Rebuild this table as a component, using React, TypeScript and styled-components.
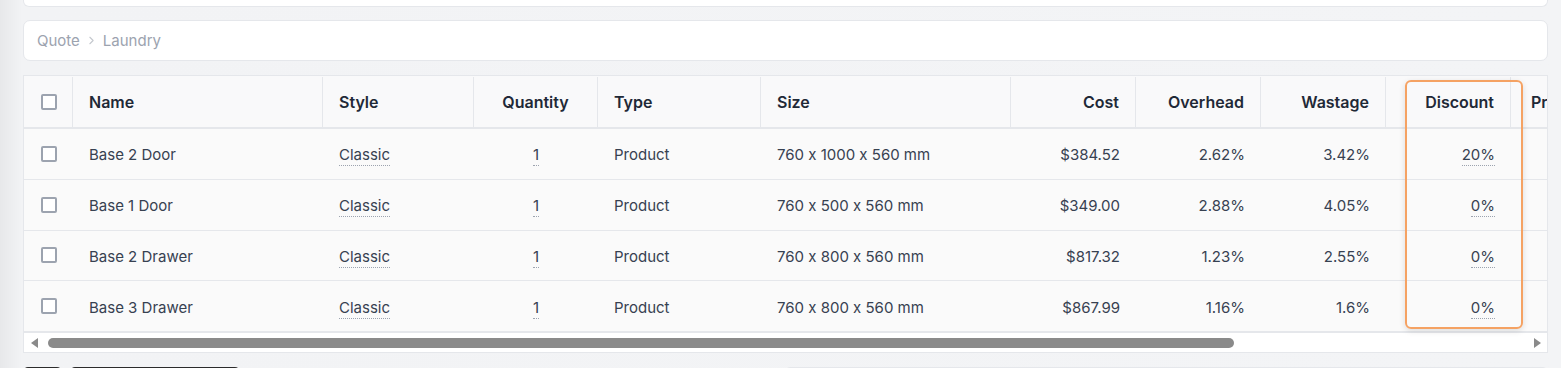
import React from "react";
import styled, { createGlobalStyle } from "styled-components";
import { ChevronRight } from "lucide-react";

const GlobalStyle = createGlobalStyle`
  html, body {
    margin: 0;
    padding: 0;
    height: 100%;
    overflow: hidden;
  }
  body {
    background: linear-gradient(to right, #e7e8ea 0, #f2f3f5 22px, #f3f4f6 100%);
    font-family: Inter, "Noto Sans", "Liberation Sans", sans-serif;
    font-feature-settings: "calt" 0;
    color: #374151;
  }
  * { box-sizing: border-box; }
`;

const Page = styled.div`
  display: flex;
  flex-direction: column;
  gap: 13px;
  padding: 0 13px 0 23px;
  width: 1561px;
  height: 368px;
  overflow: hidden;
`;

const TopCard = styled.div`
  flex: none;
  height: 7px;
  background: #fff;
  border: 1px solid #e5e7eb;
  border-top: none;
  border-radius: 0 0 6px 6px;
`;

const Breadcrumb = styled.nav`
  flex: none;
  height: 41px;
  background: #fff;
  border: 1px solid #e5e7eb;
  border-radius: 7px;
  display: flex;
  align-items: center;
  gap: 5px;
  padding: 0 13px;
  font-size: 15px;
  color: #9ca3af;
  margin-bottom: 1px;
`;

const TableCard = styled.div`
  flex: none;
  position: relative;
  height: 278px;
  background: #fff;
  border: 1px solid #e5e7eb;
  overflow: hidden;
`;

const Scroller = styled.div`
  overflow: hidden;
  width: 100%;
`;

const cols = "49px 250px 151px 124px 163px 250px 125px 125px 125px 125px 125px";

const HeaderRow = styled.div`
  display: grid;
  grid-template-columns: ${cols};
  width: 1612px;
  height: 53px;
  padding-top: 1px;
  background: #f9f9fa;
  border-bottom: 2px solid #e5e7eb;
`;

const Th = styled.div<{ $align?: "left" | "right" | "center"; $inset?: number }>`
  display: flex;
  align-items: center;
  justify-content: ${(p) =>
    p.$align === "right" ? "flex-end" : p.$align === "center" ? "center" : "flex-start"};
  padding: 0 16px 0 ${(p) => p.$inset ?? 16}px;
  border-right: 1px solid #e5e7eb;
  font-size: 16px;
  font-weight: 600;
  color: #1f2937;
  white-space: nowrap;
`;

const Row = styled.div`
  display: grid;
  grid-template-columns: ${cols};
  width: 1612px;
  height: 50.75px;
  background: #fafafa;
  border-bottom: 1px solid #e5e7eb;
`;

const Td = styled.div<{ $align?: "left" | "right" | "center" }>`
  display: flex;
  align-items: center;
  justify-content: ${(p) =>
    p.$align === "right" ? "flex-end" : p.$align === "center" ? "center" : "flex-start"};
  padding: 2px 16px 0;
  font-size: 15px;
  color: #374151;
  white-space: nowrap;
`;

const CheckCell = styled.div<{ $header?: boolean }>`
  display: flex;
  align-items: center;
  justify-content: flex-start;
  padding-left: 17px;
  border-right: ${(p) => (p.$header ? "1px solid #e5e7eb" : "none")};
`;

const Checkbox = styled.span`
  width: 16px;
  height: 16px;
  border: 2px solid #9ca3af;
  border-radius: 2px;
  background: #fff;
`;

const Editable = styled.span`
  border-bottom: 1px dotted #9ca3af;
  line-height: 18px;
  padding-bottom: 1px;
  margin-top: 3px;
`;

const ScrollBar = styled.div`
  display: flex;
  align-items: center;
  gap: 10px;
  height: 20px;
  padding: 0 6px 0 7px;
  background: #fff;
  border-top: 1px solid #e5e7eb;
`;

const Arrow = styled.span<{ $dir: "left" | "right" }>`
  width: 0;
  height: 0;
  border-top: 5px solid transparent;
  border-bottom: 5px solid transparent;
  ${(p) =>
    p.$dir === "left"
      ? "border-right: 7px solid #8a8a8a;"
      : "border-left: 7px solid #8a8a8a; margin-left: auto;"}
`;

const Thumb = styled.span`
  width: 1186px;
  height: 10px;
  border-radius: 5px;
  background: #8a8a8a;
`;

const Highlight = styled.div`
  position: absolute;
  left: 1381px;
  top: 4px;
  width: 118px;
  height: 249px;
  border: 2px solid #f5a263;
  border-radius: 6px;
  box-shadow: 0 2px 6px rgba(0, 0, 0, 0.12);
  pointer-events: none;
`;

const BottomBar = styled.div`
  flex: none;
  display: flex;
  gap: 8px;
  margin-top: 1px;
`;

const DarkButton = styled.div<{ $w: number }>`
  width: ${(p) => p.$w}px;
  height: 30px;
  background: #2b2b2b;
  border-radius: 5px;
`;

const BottomCard = styled.div`
  margin-left: auto;
  width: 763px;
  height: 30px;
  background: #fff;
  border: 1px solid #e5e7eb;
  border-radius: 5px;
`;

type Item = {
  name: string;
  size: string;
  cost: string;
  overhead: string;
  wastage: string;
  discount: string;
};

const items: Item[] = [
  { name: "Base 2 Door", size: "760 x 1000 x 560 mm", cost: "$384.52", overhead: "2.62%", wastage: "3.42%", discount: "20%" },
  { name: "Base 1 Door", size: "760 x 500 x 560 mm", cost: "$349.00", overhead: "2.88%", wastage: "4.05%", discount: "0%" },
  { name: "Base 2 Drawer", size: "760 x 800 x 560 mm", cost: "$817.32", overhead: "1.23%", wastage: "2.55%", discount: "0%" },
  { name: "Base 3 Drawer", size: "760 x 800 x 560 mm", cost: "$867.99", overhead: "1.16%", wastage: "1.6%", discount: "0%" },
];

export default function App() {
  return (
    <>
      <GlobalStyle />
      <Page>
        <TopCard />
        <Breadcrumb>
          <span>Quote</span>
          <ChevronRight size={13} strokeWidth={2} color="#c4c8ce" />
          <span>Laundry</span>
        </Breadcrumb>
        <TableCard>
          <Scroller>
            <HeaderRow>
              <CheckCell $header>
                <Checkbox />
              </CheckCell>
              <Th>Name</Th>
              <Th>Style</Th>
              <Th $align="center">Quantity</Th>
              <Th>Type</Th>
              <Th>Size</Th>
              <Th $align="right">Cost</Th>
              <Th $align="right">Overhead</Th>
              <Th $align="right">Wastage</Th>
              <Th $align="right">Discount</Th>
              <Th $inset={20}>Price</Th>
            </HeaderRow>
            {items.map((it) => (
              <Row key={it.name}>
                <CheckCell>
                  <Checkbox />
                </CheckCell>
                <Td>{it.name}</Td>
                <Td>
                  <Editable>Classic</Editable>
                </Td>
                <Td $align="center">
                  <Editable>1</Editable>
                </Td>
                <Td>Product</Td>
                <Td>{it.size}</Td>
                <Td $align="right">{it.cost}</Td>
                <Td $align="right">{it.overhead}</Td>
                <Td $align="right">{it.wastage}</Td>
                <Td $align="right">
                  <Editable>{it.discount}</Editable>
                </Td>
                <Td />
              </Row>
            ))}
          </Scroller>
          <ScrollBar>
            <Arrow $dir="left" />
            <Thumb />
            <Arrow $dir="right" />
          </ScrollBar>
          <Highlight />
        </TableCard>
        <BottomBar>
          <DarkButton $w={39} />
          <DarkButton $w={170} />
          <BottomCard />
        </BottomBar>
      </Page>
    </>
  );
}
